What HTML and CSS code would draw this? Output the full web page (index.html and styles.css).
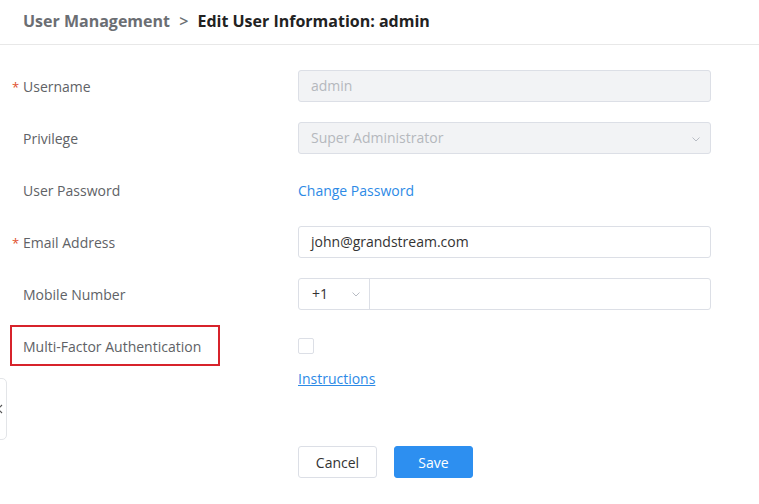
FILE: index.html
```html
<!DOCTYPE html>
<html>
<head>
<meta charset="utf-8">
<link rel="stylesheet" href="styles.css">
</head>
<body>
<div class="header">
  <span class="crumb-parent">User Management</span>
  <span class="crumb-sep">&gt;</span>
  <span class="crumb-current">Edit User Information: admin</span>
</div>
<div class="side-tab">
  <svg class="side-arrow" width="8" height="10" viewBox="0 0 8 10"><path d="M6 1 L2 5 L6 9" fill="none" stroke="#555" stroke-width="1.2"/></svg>
</div>
<form class="form">
  <div class="row">
    <div class="label"><span class="req">*</span>Username</div>
    <div class="control"><div class="input disabled">admin</div></div>
  </div>
  <div class="row">
    <div class="label">Privilege</div>
    <div class="control">
      <div class="input disabled select">Super Administrator
        <svg class="chev" width="8" height="5" viewBox="0 0 8 5"><path d="M0.5 0.5 L4 4 L7.5 0.5" fill="none" stroke="#b8bcc4" stroke-width="1"/></svg>
      </div>
    </div>
  </div>
  <div class="row">
    <div class="label">User Password</div>
    <div class="control"><a class="link">Change Password</a></div>
  </div>
  <div class="row">
    <div class="label"><span class="req">*</span>Email Address</div>
    <div class="control"><div class="input">john@grandstream.com</div></div>
  </div>
  <div class="row">
    <div class="label">Mobile Number</div>
    <div class="control">
      <div class="phone">
        <div class="prefix">+1
          <svg class="chev-s" width="8" height="5" viewBox="0 0 8 5"><path d="M0.5 0.5 L4 4 L7.5 0.5" fill="none" stroke="#b8bcc4" stroke-width="1"/></svg>
        </div>
        <div class="number"></div>
      </div>
    </div>
  </div>
  <div class="row row-tight">
    <div class="label"><span class="mark-wrap">Multi-Factor Authentication<span class="mark"></span></span></div>
    <div class="control"><span class="checkbox"></span></div>
  </div>
  <div class="row">
    <div class="label"></div>
    <div class="control"><a class="link underline">Instructions</a></div>
  </div>
  <div class="actions">
    <button type="button" class="btn btn-cancel">Cancel</button>
    <button type="button" class="btn btn-save">Save</button>
  </div>
</form>
</body>
</html>
```
FILE: styles.css
```css
html, body {
  margin: 0;
  padding: 0;
  background: #ffffff;
  font-family: "Open Sans", "Noto Sans", "Liberation Sans", sans-serif;
  font-size: 14px;
  color: #333;
}
.header {
  height: 45px;
  box-sizing: border-box;
  border-bottom: 1px solid #e8e8e8;
  padding: 9px 0 0 23px;
  line-height: 24px;
  font-size: 16px;
  font-weight: 700;
  white-space: nowrap;
}
.crumb-parent { color: #6b6e73; }
.crumb-sep { color: #6b6e73; margin: 0 5px 0 5px; font-weight: 600; }
.crumb-current { color: #222; }

.side-tab {
  position: absolute;
  left: -6px;
  top: 378px;
  width: 13px;
  height: 62px;
  box-sizing: border-box;
  border: 1px solid #e3e5e8;
  border-radius: 5px;
  background: #fff;
  overflow: hidden;
}
.side-arrow {
  position: absolute;
  left: 1px;
  top: 25px;
}

.form {
  padding-top: 25px;
}
.row {
  display: flex;
  align-items: center;
  height: 32px;
  margin-bottom: 20px;
}
.row-tight { margin-bottom: 0; }
.label {
  width: 298px;
  box-sizing: border-box;
  padding-left: 23px;
  color: #606266;
  white-space: nowrap;
}
.req {
  display: inline-block;
  width: 11px;
  margin-left: -11px;
  color: #e0502c;
  font-size: 13px;
}
.control {
  width: 413px;
}
.input {
  height: 32px;
  box-sizing: border-box;
  border: 1px solid #dcdfe6;
  border-radius: 3px;
  padding: 0 12px;
  line-height: 30px;
  color: #333;
  background: #fff;
  position: relative;
}
.input.disabled {
  background: #f2f3f5;
  color: #b5b8bd;
}
.chev {
  position: absolute;
  right: 10px;
  top: 14px;
}
.link {
  color: #2d8ae6;
  cursor: pointer;
}
.underline { text-decoration: underline; }

.phone {
  display: flex;
  height: 32px;
  box-sizing: border-box;
  border: 1px solid #dcdfe6;
  border-radius: 3px;
}
.prefix {
  width: 71px;
  box-sizing: border-box;
  border-right: 1px solid #dcdfe6;
  padding-left: 13px;
  line-height: 30px;
  color: #333;
  position: relative;
}
.chev-s {
  position: absolute;
  right: 9px;
  top: 13px;
}
.number { flex: 1; }

.mark-wrap {
  position: relative;
}
.mark {
  position: absolute;
  left: -13px;
  top: -12px;
  width: 210px;
  height: 41px;
  box-sizing: border-box;
  border: 2px solid #d7232b;
}
.checkbox {
  display: block;
  width: 16px;
  height: 16px;
  box-sizing: border-box;
  border: 1px solid #dcdfe6;
  border-radius: 2px;
  background: #fff;
}

.actions {
  display: flex;
  gap: 17px;
  padding-left: 298px;
  margin-top: 52px;
}
.btn {
  width: 79px;
  height: 32px;
  box-sizing: border-box;
  border-radius: 3px;
  font-family: inherit;
  font-size: 14px;
  cursor: pointer;
}
.btn-cancel {
  background: #fff;
  border: 1px solid #dcdfe6;
  color: #333;
}
.btn-save {
  background: #2d8ff0;
  border: 1px solid #2d8ff0;
  color: #fff;
}
```
